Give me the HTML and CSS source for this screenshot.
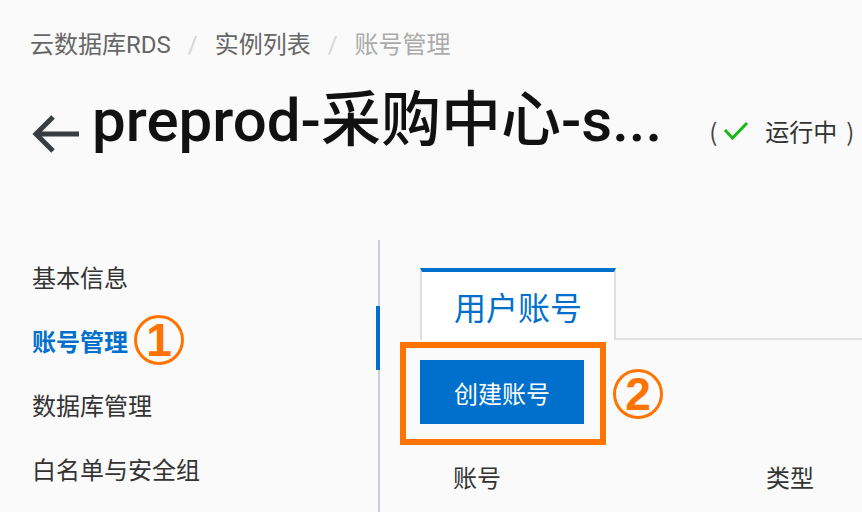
FILE: index.html
```html
<!DOCTYPE html>
<html lang="zh-CN">
<head>
<meta charset="utf-8">
<title>账号管理</title>
<link rel="stylesheet" href="styles.css">
</head>
<body>
<header class="page-header">
  <nav class="crumbs">
    <span class="crumb">云数据库RDS</span><span class="sep">/</span><span class="crumb">实例列表</span><span class="sep">/</span><span class="crumb current">账号管理</span>
  </nav>
  <div class="title-row">
    <svg class="back" width="48" height="40" viewBox="0 0 48 40" aria-hidden="true">
      <path d="M48 20H6M22 3L5 20L22 37" fill="none" stroke="#373d41" stroke-width="5"/>
    </svg>
    <h1 class="title">preprod-采购中心-s...</h1>
    <span class="status">
      <span class="paren open">(</span>
      <svg class="check" width="26" height="20" viewBox="0 0 26 20" aria-hidden="true">
        <path d="M2 9L9.5 17L24 2" fill="none" stroke="#17b817" stroke-width="3"/>
      </svg>
      <span class="state">运行中</span>
      <span class="paren close">)</span>
    </span>
  </div>
</header>
<main class="layout">
  <aside class="side">
    <a class="side-item">基本信息</a>
    <a class="side-item active">账号管理<span class="mark">1</span></a>
    <a class="side-item">数据库管理</a>
    <a class="side-item">白名单与安全组</a>
  </aside>
  <section class="content">
    <div class="tabs">
      <div class="tab active">用户账号</div>
    </div>
    <div class="toolbar">
      <div class="highlight"><button class="btn">创建账号</button></div>
      <span class="mark">2</span>
    </div>
    <div class="thead">
      <span>账号</span>
      <span>类型</span>
    </div>
  </section>
</main>
</body>
</html>
```

FILE: styles.css
```css
html, body {
  margin: 0;
  background: #fafafa;
  overflow: hidden;
}
body {
  font-family: "Roboto", "Noto Sans CJK SC", sans-serif;
  color: #333;
  width: 862px;
  height: 512px;
}
.page-header {
  padding: 29px 0 0 30px;
}
.crumbs {
  display: flex;
  font-size: 24px;
  line-height: 32px;
  color: #666;
}
.sep {
  color: #d6d6d6;
  margin: 0 17px;
}
.current {
  color: #aaa;
}
.title-row {
  display: flex;
  align-items: center;
  margin-top: 28px;
  height: 64px;
}
.back {
  margin: 26px 13px 0 1px;
  flex: none;
}
.title {
  margin: 0;
  font-size: 60px;
  line-height: 64px;
  font-weight: 500;
  color: #111;
  white-space: nowrap;
}
.status {
  display: flex;
  align-items: center;
  margin: 20px 0 0 47px;
  font-family: "Noto Sans CJK SC", sans-serif;
  font-size: 24px;
  line-height: 32px;
  color: #333;
  white-space: nowrap;
}
.paren {
  color: #444;
}
.open {
  margin-right: 6px;
}
.check {
  flex: none;
  margin-right: 16px;
}
.close {
  margin-left: 9px;
}
.layout {
  display: flex;
  margin-top: 87px;
  height: 272px;
}
.side {
  box-sizing: border-box;
  width: 380px;
  flex: none;
  border-right: 2px solid #c9ced6;
  padding: 4px 0 0 32px;
  display: flex;
  flex-direction: column;
}
.side-item {
  position: relative;
  display: flex;
  align-items: center;
  height: 64px;
  font-size: 24px;
  color: #333;
}
.side-item.active {
  color: #0070cc;
  font-weight: 700;
}
.side-item.active::after {
  content: "";
  position: absolute;
  right: -2px;
  top: -2px;
  width: 4px;
  height: 64px;
  background: #0070cc;
}
.mark {
  box-sizing: border-box;
  width: 50px;
  height: 50px;
  flex: none;
  border: 3px solid #ff7300;
  border-radius: 50%;
  display: inline-flex;
  align-items: center;
  justify-content: center;
  color: #ff7300;
  font-family: "Liberation Sans", sans-serif;
  font-size: 46px;
  font-weight: 700;
  line-height: 1;
  margin-left: 6px;
}
.content {
  flex: 1;
  padding: 28px 0 0 40px;
}
.tabs {
  display: flex;
  height: 70px;
  border-bottom: 2px solid #e0e0e0;
}
.tab {
  box-sizing: border-box;
  width: 196px;
  height: 72px;
  margin-bottom: -2px;
  border-top: 4px solid #0070cc;
  border-left: 2px solid #dedede;
  border-right: 2px solid #dedede;
  background: #fff;
  display: flex;
  align-items: center;
  justify-content: center;
  font-size: 32px;
  color: #0070cc;
}
.toolbar {
  display: flex;
  align-items: center;
  margin: 2px 0 0 -20px;
}
.highlight {
  border: 6px solid #ff7300;
  padding: 12px 16px 15px 14px;
}
.btn {
  display: block;
  width: 164px;
  height: 64px;
  border: none;
  background: #0070cc;
  color: #fff;
  font-family: "Noto Sans CJK SC", sans-serif;
  font-size: 24px;
  padding: 0;
}
.toolbar .mark {
  margin-left: 7px;
}
.thead {
  display: grid;
  grid-template-columns: 313px auto;
  padding-left: 33px;
  margin-top: 2px;
  height: 64px;
  line-height: 64px;
  font-size: 24px;
  color: #333;
}
```
